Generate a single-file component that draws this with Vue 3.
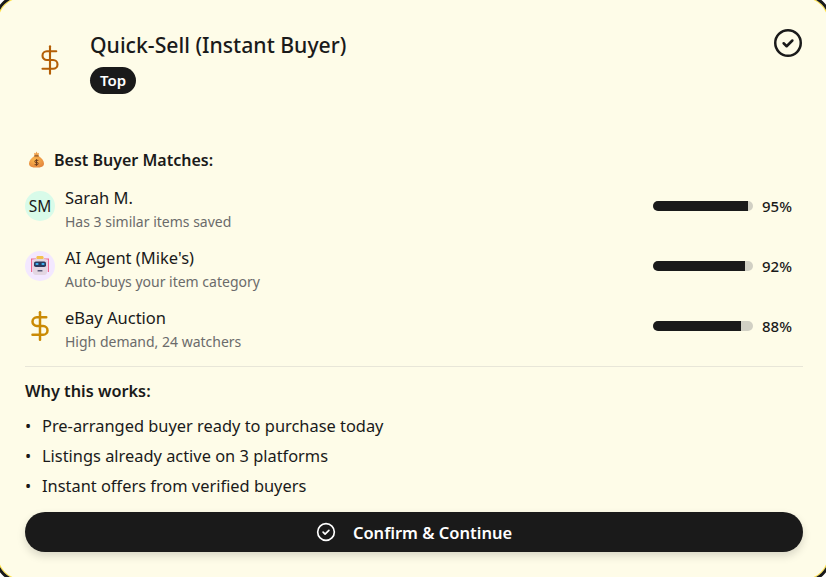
<template>
  <div class="page">
    <div class="card">
      <div class="head">
        <div class="head-icon">
          <svg width="30" height="30" viewBox="0 0 24 24" fill="none" stroke="#b45f06" stroke-width="1.7" stroke-linecap="round" stroke-linejoin="round">
            <line x1="12" y1="1" x2="12" y2="23" />
            <path d="M17 5H9.5a3.5 3.5 0 0 0 0 7h5a3.5 3.5 0 0 1 0 7H6" />
          </svg>
        </div>
        <div class="head-text">
          <h2>Quick-Sell (Instant Buyer)</h2>
          <span class="badge">Top</span>
        </div>
        <svg class="head-check" width="30" height="30" viewBox="0 0 24 24" fill="none" stroke="#1a1a1a" stroke-width="2" stroke-linecap="round" stroke-linejoin="round">
          <circle cx="12" cy="12" r="10.2" />
          <path d="M8.5 12.2l2.4 2.4 4.6-4.6" />
        </svg>
      </div>

      <div class="matches-title">
        <svg class="bag" width="17" height="17" viewBox="0 0 17 17">
          <defs>
            <radialGradient id="bagFill" cx="0.4" cy="0.35" r="0.8">
              <stop offset="0" stop-color="#fdb94f" />
              <stop offset="1" stop-color="#e07f3a" />
            </radialGradient>
          </defs>
          <path d="M6.4 5C3.2 7 1 9.8 1 12.4 1 15.4 3.6 16.5 8.500 16.500s7.500-1.100 7.500-4.100C16 9.800 13.800 7 10.600 5z" fill="url(#bagFill)" />
          <path d="M6 1.800l1.500.6L8.500.6l1 1.800 1.500-.6-.6 3.200H6.600z" fill="#f0a04a" />
          <rect x="6.200" y="4.200" width="4.600" height="1.300" rx=".6" fill="#8f5a2a" />
          <path d="M10.400 9.300H7.900a1.100 1.100 0 0 0 0 2.200h1.200a1.100 1.100 0 0 1 0 2.200H6.600M8.500 8.200v6.600" fill="none" stroke="#6e3d1e" stroke-width="1" />
        </svg>
        Best Buyer Matches:
      </div>

      <div class="matches">
        <div v-for="m in matches" :key="m.name" class="match">
          <div class="who">
            <div v-if="m.initials" class="avatar mint">{{ m.initials }}</div>
            <div v-else-if="m.robot" class="avatar lilac">
              <svg width="20" height="22" viewBox="0 0 20 22">
                <rect x="1" y="4" width="1.200" height="13" fill="#ec6a8c" />
                <rect x="17.800" y="4" width="1.200" height="13" fill="#ec6a8c" />
                <rect x="1" y="3.500" width="5" height="1" fill="#ec6a8c" />
                <rect x="14" y="3.500" width="5" height="1" fill="#ec6a8c" />
                <rect x="6.500" y="1" width="7" height="3.500" rx="1.200" fill="#f2c14e" />
                <rect x="3" y="4" width="14" height="16" rx="3" fill="#e3d6e2" />
                <rect x="4" y="6.500" width="12" height="5.500" rx="1.800" fill="#2b3a5e" />
                <rect x="5.500" y="8" width="3" height="2" rx=".8" fill="#3fb2f0" />
                <rect x="11.500" y="8" width="3" height="2" rx=".8" fill="#3fb2f0" />
                <rect x="7.500" y="15" width="5" height="1.600" rx=".6" fill="#5a5a78" />
              </svg>
            </div>
            <div v-else class="avatar">
              <svg width="30" height="30" viewBox="0 0 24 24" fill="none" stroke="#ca8a04" stroke-width="2" stroke-linecap="round" stroke-linejoin="round">
                <line x1="12" y1="1" x2="12" y2="23" />
                <path d="M17 5H9.5a3.5 3.5 0 0 0 0 7h5a3.5 3.5 0 0 1 0 7H6" />
              </svg>
            </div>
            <div>
              <div class="name">{{ m.name }}</div>
              <div class="sub">{{ m.sub }}</div>
            </div>
          </div>
          <div class="score">
            <div class="bar"><div class="fill" :style="{ width: m.score + '%' }"></div></div>
            <span class="pct">{{ m.score }}%</span>
          </div>
        </div>
      </div>

      <div class="why">
        <h3>Why this works:</h3>
        <ul>
          <li v-for="r in reasons" :key="r"><span class="dot">•</span>{{ r }}</li>
        </ul>
      </div>

      <button class="confirm">
        <svg width="20" height="20" viewBox="0 0 24 24" fill="none" stroke="#fff" stroke-width="2" stroke-linecap="round" stroke-linejoin="round">
          <circle cx="12" cy="12" r="10" />
          <path d="M8.5 12.2l2.4 2.4 4.6-4.6" />
        </svg>
        Confirm &amp; Continue
      </button>
    </div>
  </div>
</template>

<script setup>
const matches = [
  { name: 'Sarah M.', sub: 'Has 3 similar items saved', score: 95, initials: 'SM' },
  { name: "AI Agent (Mike's)", sub: 'Auto-buys your item category', score: 92, robot: true },
  { name: 'eBay Auction', sub: 'High demand, 24 watchers', score: 88 }
]

const reasons = [
  'Pre-arranged buyer ready to purchase today',
  'Listings already active on 3 platforms',
  'Instant offers from verified buyers'
]
</script>

<style>
html, body { margin: 0; background: #fff; }
</style>

<style scoped>
.page {
  width: 826px;
  height: 577px;
  overflow: hidden;
  font-family: "Noto Sans", "Open Sans", sans-serif;
  color: #1a1a1a;
}
/* card is a bit bigger than the window, only its rounded border shows in the corners */
.card {
  box-sizing: border-box;
  width: 838px;
  height: 589px;
  margin: -6px;
  background: #fefce8;
  border: 3px solid #1a1a1a;
  border-radius: 28px;
  box-shadow: inset 0 0 0 1px #fde047;
  padding: 31px 26px 0 28px;
}
.head { display: flex; align-items: flex-start; height: 103px; }
.head-icon { width: 50px; height: 64px; display: flex; align-items: center; justify-content: center; margin-right: 15px; }
.head-text { flex: 1; }
h2 { margin: 0; font-size: 21.2px; line-height: 34px; font-weight: 500; }
.badge { display: inline-block; margin-top: 5px; height: 27px; line-height: 27px; padding: 0 10px; border-radius: 14px; background: #1a1a1a; color: #fff; font-size: 15px; font-weight: 600; }
.matches-title { margin-left: 3px; margin-top: 17px; font-size: 16px; line-height: 24px; font-weight: 600; display: flex; align-items: center; }
.bag { margin-right: 9px; margin-top: -1px; }
.matches { margin-top: 14px; }
.match { display: flex; justify-content: space-between; align-items: flex-start; height: 60px; }
.who { display: flex; align-items: flex-start; gap: 10px; }
.avatar { width: 30px; height: 30px; margin-top: 5px; border-radius: 50%; display: flex; align-items: center; justify-content: center; font-size: 15.500px; }
.mint { background: #d8fbe9; }
.lilac { background: #f3e8ff; }
.name { font-size: 16.500px; line-height: 24px; }
.sub { font-size: 14px; line-height: 20px; margin-top: 2px; color: #6b6b6b; }
.score { display: flex; align-items: center; gap: 9px; height: 30px; margin-top: 5px; margin-right: 11px; }
.bar { width: 100px; height: 10px; border-radius: 5px; background: #d1d0c4; overflow: hidden; }
.fill { height: 100%; background: #1a1a1a; }
.pct { font-size: 15px; font-weight: 500; width: 30px; white-space: nowrap; }
.why { border-top: 1px solid #e8e6d8; padding-top: 12px; }
h3 { margin: 0; font-size: 16.300px; line-height: 24px; font-weight: 600; }
ul { list-style: none; margin: 11px 0 14px; padding: 0; }
li { font-size: 16.400px; line-height: 24px; display: flex; }
li + li { margin-top: 6px; }
.dot { width: 17px; }
.confirm {
  width: 100%;
  height: 40px;
  border: 0;
  border-radius: 20px;
  background: #1a1a1a;
  color: #fff;
  font: 600 16.500px "Noto Sans", sans-serif;
  display: flex;
  align-items: center;
  justify-content: center;
  gap: 17px;
  box-shadow: 0 4px 8px rgba(0, 0, 0, 0.15);
}
</style>
